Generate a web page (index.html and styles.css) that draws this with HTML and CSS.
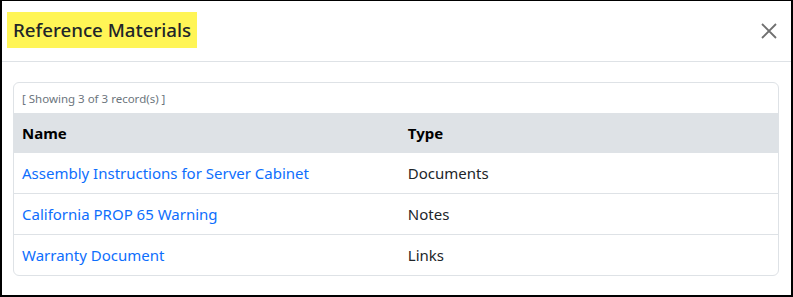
FILE: index.html
```html
<!DOCTYPE html>
<html lang="en">
<head>
    <meta charset="UTF-8">
    <meta name="viewport" content="width=device-width, initial-scale=1.0">
    <title>Reference Materials</title>
    <link rel="stylesheet" href="styles.css">
</head>
<body>
    <div class="modal">
        <!-- Header Section -->
        <div class="modal-header">
            <h5 class="modal-title">Reference Materials</h5>
            <button class="close" aria-label="Close">
                <svg width="16" height="16" viewBox="0 0 16 16">
                    <path d="M1 1L15 15M15 1L1 15" stroke="#707070" stroke-width="1.8" fill="none"/>
                </svg>
            </button>
        </div>

        <!-- Body Section -->
        <div class="modal-body">
            <div class="card">
                <div class="record-count">[ Showing 3 of 3 record(s) ]</div>
                <table class="table">
                    <thead>
                        <tr>
                            <th class="col-name">Name</th>
                            <th>Type</th>
                        </tr>
                    </thead>
                    <tbody>
                        <tr>
                            <td><a href="#">Assembly Instructions for Server Cabinet</a></td>
                            <td>Documents</td>
                        </tr>
                        <tr>
                            <td><a href="#">California PROP 65 Warning</a></td>
                            <td>Notes</td>
                        </tr>
                        <tr>
                            <td><a href="#">Warranty Document</a></td>
                            <td>Links</td>
                        </tr>
                    </tbody>
                </table>
            </div>
        </div>
    </div>
</body>
</html>
```

FILE: styles.css
```css
* {
    margin: 0;
    padding: 0;
    box-sizing: border-box;
    font-family: "Noto Sans", "Liberation Sans", Arial, sans-serif;
}

body {
    background-color: #fff;
    color: #212529;
}

.modal {
    width: 793px;
    height: 297px;
    border: 2px solid #000;
    border-top-width: 1px;
    background: #fff;
}

/* Header */
.modal-header {
    display: flex;
    justify-content: space-between;
    align-items: center;
    height: 61px;
    padding: 0 14px 0 5px;
    border-bottom: 1px solid #dee2e6;
}

.modal-title {
    font-size: 18.7px;
    font-weight: 500;
    line-height: 36px;
    background: #fff556;
    padding: 0 6px;
    margin-top: -2px;
}

.close {
    background: none;
    border: none;
    width: 16px;
    height: 16px;
    cursor: pointer;
    margin-top: -1px;
}

.close svg {
    display: block;
}

/* Body */
.modal-body {
    padding: 20px 12px 0 11px;
}

.card {
    border: 1px solid #dee2e6;
    border-radius: 6px;
    overflow: hidden;
}

.record-count {
    font-size: 11.5px;
    line-height: 18px;
    color: #6c757d;
    padding: 7px 8px 5px;
}

.table {
    width: 100%;
    border-collapse: collapse;
    font-size: 15px;
    line-height: 24px;
}

.table th,
.table td {
    text-align: left;
    padding: 8px;
}

.table th {
    background: #dee2e6;
    font-weight: 700;
    color: #000;
}

.table .col-name {
    width: 50.5%;
}

.table td {
    border-top: 1px solid #dee2e6;
}

.table tbody tr:first-child td {
    border-top: none;
}

.table a {
    color: #0d6efd;
    text-decoration: none;
}
```
